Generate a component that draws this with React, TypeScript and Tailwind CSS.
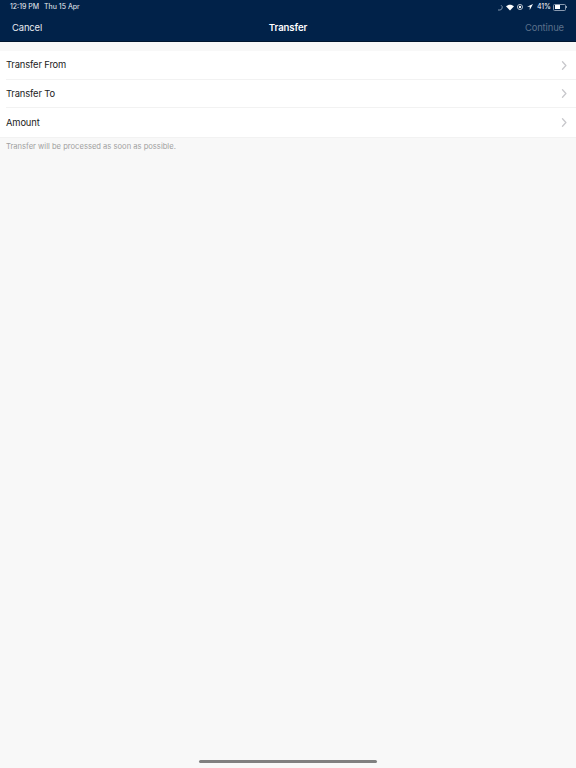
import React from "react";

function Chevron() {
  return (
    <svg width="6" height="9" viewBox="0 0 6 9" fill="none" className="shrink-0">
      <path d="M1.5 .8l3.4 3.7-3.4 3.7" stroke="#c8c8cc" strokeWidth="1.3" strokeLinecap="round" strokeLinejoin="round" />
    </svg>
  );
}

function Row({ label, last }: { label: string; last?: boolean }) {
  return (
    <div className="pl-[6px] bg-white">
      <div className={"h-[28.5px] pt-[1px] flex items-center justify-between pr-[9.5px] text-[9.4px] tracking-[-0.15px] text-[#222222] " + (last ? "" : "border-b border-[#f2f2f2]")}>
        <span>{label}</span>
        <Chevron />
      </div>
    </div>
  );
}

function StatusIcons() {
  return (
    <div className="flex items-center gap-[3px]">
      <svg width="6" height="7" viewBox="0 0 6 7" fill="none">
        <path d="M4 1.2A2.6 2.6 0 0 1 3 6H1" stroke="#9fb0c4" strokeWidth="0.8" />
      </svg>
      <svg width="8" height="7" viewBox="0 0 9 7" fill="white">
        <path d="M4.5 6.8L0 2.2C2.5-.3 6.5-.3 9 2.2z" />
      </svg>
      <svg width="6" height="6" viewBox="0 0 7 7" fill="none">
        <circle cx="3.5" cy="3.5" r="3" stroke="white" strokeWidth="0.8" />
        <circle cx="3.5" cy="3.5" r="1.4" fill="white" />
      </svg>
      <svg width="6" height="6" viewBox="0 0 7 7" fill="white" className="ml-[1px]">
        <path d="M7 0L0 3.2h3.2V7z" />
      </svg>
      <span className="text-[7px] ml-[1px] text-white">41%</span>
      <div className="flex items-center ml-[-1px]">
        <div className="w-[13px] h-[7px] rounded-[1.5px] border-[0.5px] border-[#8a9ab0] p-[0.5px]">
          <div className="h-full w-[5.5px] bg-white" />
        </div>
        <div className="w-[1px] h-[2.5px] bg-[#8a9ab0]" />
      </div>
    </div>
  );
}

export default function App() {
  return (
    <div className="relative h-[768px] w-[576px] overflow-hidden bg-[#f8f8f8] font-['Inter','Liberation_Sans',sans-serif]">
      <header className="h-[42px] bg-[#012249] flex flex-col border-b border-[#00152e]">
        <div className="h-[14px] flex items-center justify-between pl-[10px] pr-[9px] text-[7px] text-[#eef1f5]">
          <div className="flex gap-[5px] pt-[1px]">
            <span>12:19 PM</span>
            <span>Thu 15 Apr</span>
          </div>
          <StatusIcons />
        </div>
        <div className="flex-1 grid grid-cols-3 items-center px-[12px] pt-[2px] text-[9.4px] tracking-[-0.1px]">
          <span className="text-[#e8ecf1]">Cancel</span>
          <span className="text-center text-[9.6px] font-semibold text-white">Transfer</span>
          <span className="text-right text-[#5b7089]">Continue</span>
        </div>
      </header>
      <div className="mt-[9px] border-b border-[#f2f2f2]">
        <Row label="Transfer From" />
        <Row label="Transfer To" />
        <Row label="Amount" last />
      </div>
      <p className="pl-[6px] mt-[3px] text-[7.6px] leading-[11px] text-[#a0a0a0]">
        Transfer will be processed as soon as possible.
      </p>
      <div className="absolute left-[199px] top-[760px] h-[3px] w-[178px] rounded-full bg-[#808080]" />
    </div>
  );
}
